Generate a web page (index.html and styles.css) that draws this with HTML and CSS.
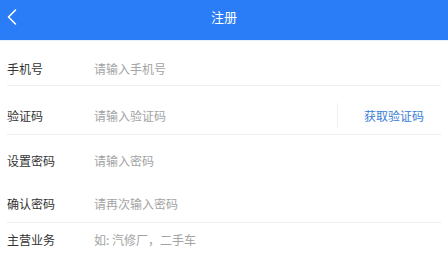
FILE: index.html
```html
<!DOCTYPE html>
<html lang="zh-CN">
<head>
<meta charset="utf-8">
<link rel="stylesheet" href="styles.css">
</head>
<body>
<div class="header">
  <svg class="back" width="20" height="20" viewBox="0 0 20 20"><polyline points="12.5,3 5.5,10 12.5,17" fill="none" stroke="#fff" stroke-width="1.6" stroke-linecap="round" stroke-linejoin="round"/></svg>
  <div class="title">注册</div>
</div>
<div class="form">
  <div class="row r1 line"><span class="label">手机号</span><span class="ph">请输入手机号</span></div>
  <div class="row r2 line"><span class="label">验证码</span><span class="ph grow">请输入验证码</span><span class="code">获取验证码</span></div>
  <div class="row r3"><span class="label">设置密码</span><span class="ph">请输入密码</span></div>
  <div class="row r4 line"><span class="label">确认密码</span><span class="ph">请再次输入密码</span></div>
  <div class="row r5"><span class="label">主营业务</span><span class="ph">如: 汽修厂，二手车</span></div>
</div>
</body>
</html>
```
FILE: styles.css
```css
* { box-sizing: border-box; }
html, body { margin: 0; padding: 0; background: #fff; }
body {
  font-family: "Noto Sans CJK SC", "Noto Sans", sans-serif;
  width: 448px;
  height: 257px;
  overflow: hidden;
}
.header {
  height: 41px;
  background: #2a7cf7;
  border-bottom: 1px solid #e8f0fb;
  display: flex;
  align-items: center;
  justify-content: center;
  position: relative;
}
.back {
  position: absolute;
  left: 3px;
  top: 7px;
}
.title {
  color: #fff;
  font-size: 13px;
  line-height: 16px;
  margin-top: -7px;
}
.form { margin: 0 7px; }
.row {
  display: flex;
  align-items: center;
  font-size: 12px;
  line-height: 16px;
}
.line { border-bottom: 1px solid #efefef; }
.label { width: 87px; color: #333; flex: none; }
.ph { color: #a3a3a3; }
.grow { flex: 1; }
.r1 { padding: 20px 0 8px; height: 45px; }
.r2 { padding: 22px 0 10px; height: 49px; }
.r3 { padding: 18px 0 10px; height: 44px; }
.r4 { padding: 17px 0 10px; height: 44px; }
.r5 { padding: 9px 0 0; }
.code {
  color: #3a7ed8;
  border-left: 1px solid #f0f0f0;
  width: 104px;
  padding-left: 26px;
  margin: -5px 0 -4px;
  height: 25px;
  line-height: 25px;
}
```
